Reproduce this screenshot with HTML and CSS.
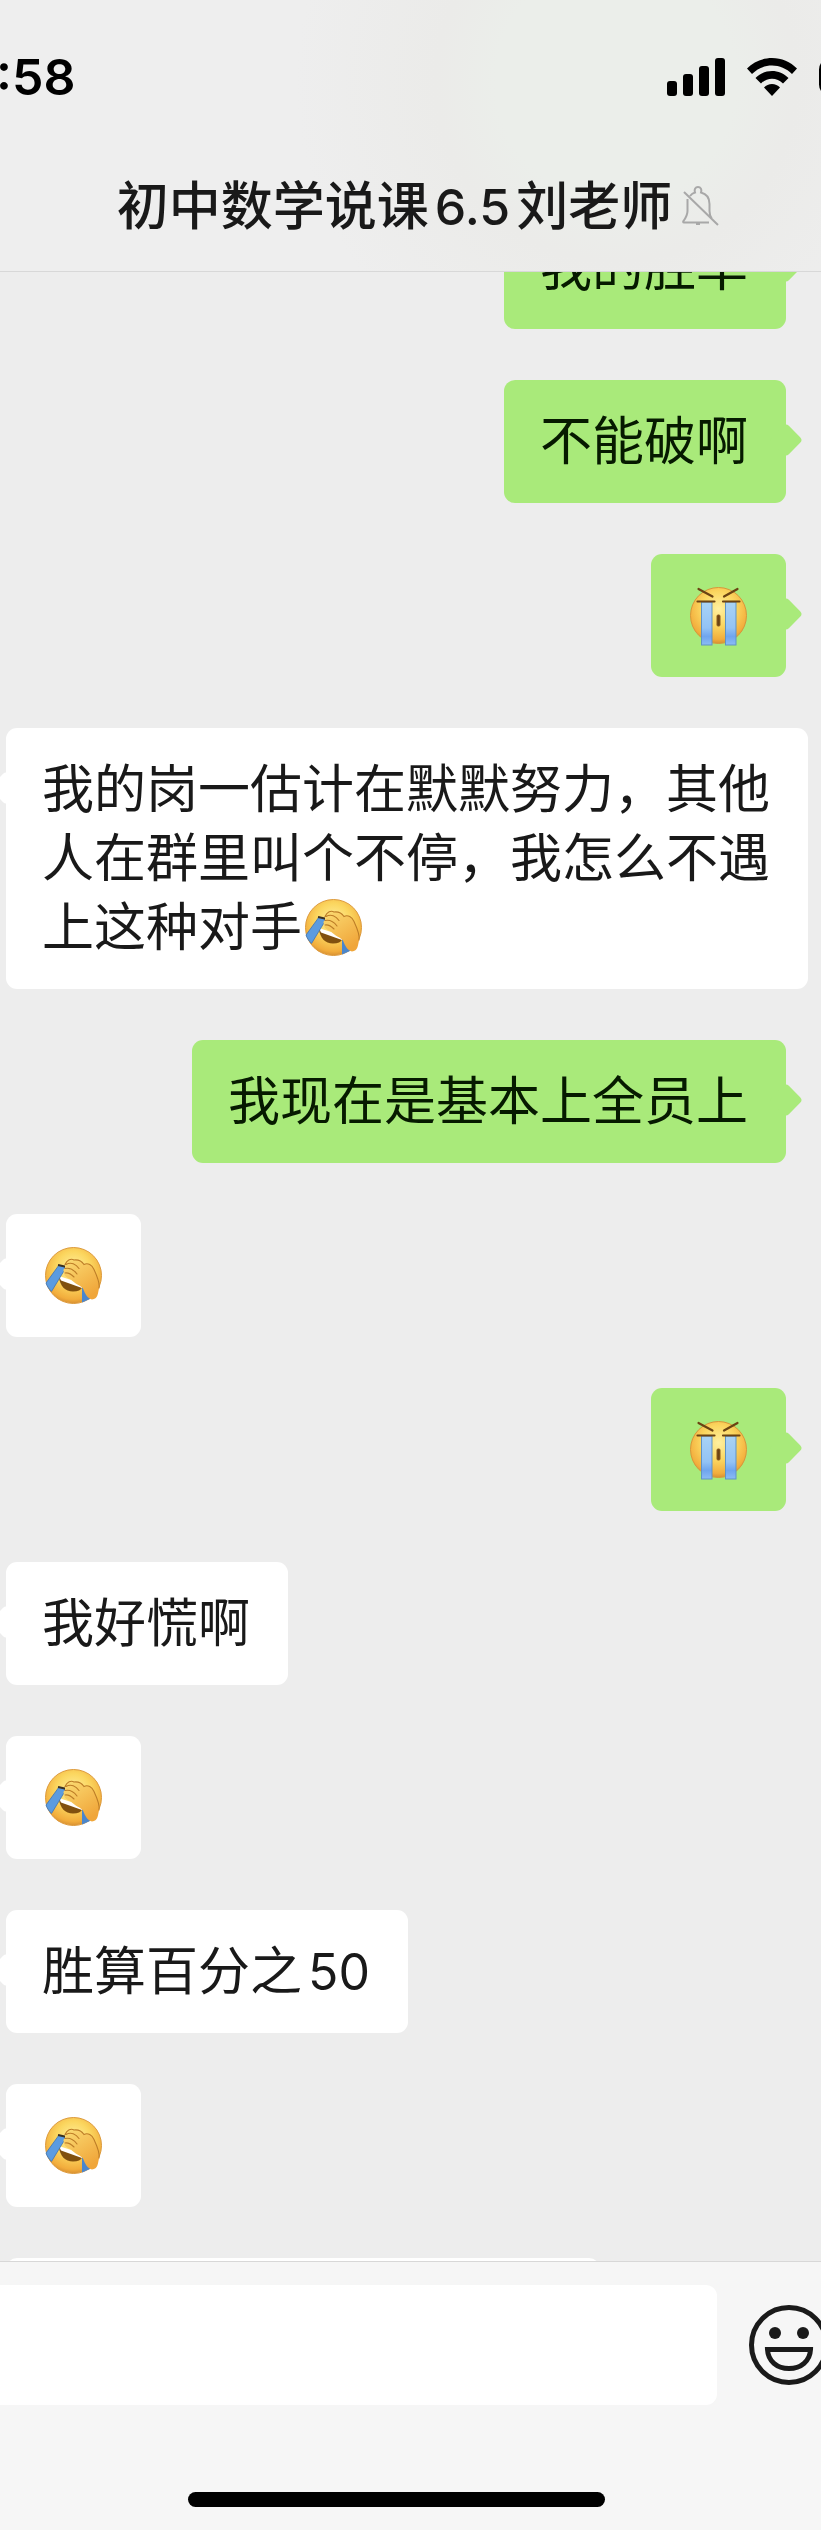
FILE: index.html
```html
<!DOCTYPE html>
<html lang="zh-CN">
<head>
  <meta charset="UTF-8">
  <meta name="viewport" content="width=device-width, initial-scale=1.0">
  <title>初中数学说课6.5刘老师</title>
  <link rel="stylesheet" href="styles.css">
</head>
<body>
  <!-- shared emoji shapes -->
  <svg class="defs" width="0" height="0" aria-hidden="true">
    <defs>
      <radialGradient id="face" cx="50%" cy="38%" r="62%">
        <stop offset="0" stop-color="#fff0a0"/>
        <stop offset="0.5" stop-color="#fbd65f"/>
        <stop offset="0.88" stop-color="#f2ad3c"/>
        <stop offset="1" stop-color="#d99132"/>
      </radialGradient>
      <linearGradient id="tear" x1="0" y1="0" x2="0" y2="1">
        <stop offset="0" stop-color="#a9d3f5"/>
        <stop offset="0.6" stop-color="#93c3f5"/>
        <stop offset="0.8" stop-color="#6fa5ee"/>
        <stop offset="1" stop-color="#8bbcf5"/>
      </linearGradient>
      <linearGradient id="hand" x1="0" y1="0" x2="0.6" y2="1">
        <stop offset="0" stop-color="#fbdc74"/>
        <stop offset="1" stop-color="#f0a63a"/>
      </linearGradient>
    </defs>
    <symbol id="cry" viewBox="0 0 61 61">
      <circle cx="30.5" cy="30.5" r="28" fill="url(#face)" stroke="#d8963a"/>
      <rect x="13.5" y="17" width="10.5" height="43" fill="url(#tear)" stroke="#5f93c4"/>
      <rect x="37.5" y="17" width="10.5" height="43" fill="url(#tear)" stroke="#5f93c4"/>
      <path d="M10.5 4 24.500 11.500M36 11.500 49.500 4M9.500 16.500H26.500M35 16.500H51.500" fill="none" stroke="#6b4313" stroke-width="2.200" stroke-linecap="round"/>
      <rect x="29" y="30" width="3" height="11" rx="1" fill="#6b4313" stroke="#8a5a1c"/>
    </symbol>
    <symbol id="facepalm" viewBox="0 0 61 61">
      <circle cx="30.5" cy="30.5" r="28" fill="url(#face)" stroke="#dd9a3c"/>
      <path d="M16 32C17 41 22 46.500 30 46.500 35 46.500 38 45 39.500 42Z" fill="#80500f"/>
      <path d="M16 31 40 39 39 43 18 35.500Z" fill="#fff"/>
      <path d="M16 20 23 22.500 8.500 46.500C5.500 43.500 4 41 3 38Z" fill="#5b9be0" stroke="#3c74b4" stroke-width="0.800"/>
      <path d="M39 42 46 46 47 54 39 57.500Z" fill="#4b86cc"/>
      <path d="M15 20 24 22" stroke="#3e3220" stroke-width="1.800"/>
      <path d="M22 19.500C24 15 28 13 31 15 35 14.500 39 16.500 41 19.500 45 17.500 49 20 51 24.500 54 31 57 39 56 43 55 48 55 54 49 54.500 45 54 42 49 40 43.500 37 40 32 39 28 34.500 24 33 20 30 21.500 28 20 26 20 24 22 23.500Z" fill="url(#hand)"/>
      <path d="M22 19.500C24 15 28 13 31 15 35 14.500 39 16.500 41 19.500 45 17.500 49 20 51 24.500 54 31 57 39 56 43M23 19.500C28 16.500 33 19 36 23.500M22 23.500C27 22.500 31 25 34 29M22 28C25 27.500 28 29 31 32" fill="none" stroke="#bd7d27" stroke-width="1.100" stroke-linecap="round"/>
    </symbol>
  </svg>

  <div class="app">
    <header class="header">
      <div class="status-bar">
        <span class="time">:58</span>
        <div class="status-icons">
          <svg width="58" height="38" viewBox="0 0 58 38" aria-hidden="true">
            <rect x="0" y="23" width="10" height="15" rx="3"/>
            <rect x="16" y="16" width="10" height="22" rx="3"/>
            <rect x="32" y="8" width="10" height="30" rx="3"/>
            <rect x="48" y="0" width="10" height="38" rx="3"/>
          </svg>
          <svg width="50" height="38" viewBox="0 0 50 38" aria-hidden="true">
            <path d="M25 0C34.500 0 43.500 4 50 10.500L45 16C39.500 10.500 32.500 7.500 25 7.500S10.500 10.500 5 16L0 10.500C6.500 4 15.500 0 25 0Z"/>
            <path d="M25 13C31 13 37 15.500 41.500 20L36 25.500C33 22.500 29 20.700 25 20.700S17 22.500 14 25.500L8.500 20C13 15.500 19 13 25 13Z"/>
            <path d="M25 26C28 26 31 27.200 33 29.500L25 38 17 29.500C19 27.200 22 26 25 26Z"/>
          </svg>
          <svg class="battery" width="76" height="38" viewBox="0 0 76 38" aria-hidden="true">
            <rect x="1.5" y="1.5" width="68" height="35" rx="10" fill="none" stroke="#000" stroke-width="3"/>
          </svg>
        </div>
      </div>
      <div class="title-bar">
        <h1>初中数学说课<span class="latin">6.5</span>刘老师</h1>
        <svg class="bell" width="38" height="40" viewBox="0 0 38 40" role="img" aria-label="消息免打扰">
          <path d="M8 10C9.500 8 11 7 13 6.500 12 3 13.500 1 16 1S20 3 19 6.500C25 8 27.500 12 27.500 18V25C27.500 29 28.500 31 30 33M27 36.500H2C1 36.500 1 35.500 1.500 35 4 31.500 5.500 29 5.500 25V13M2 6 36 39"/>
          <path d="M14 38H18"/>
        </svg>
      </div>
    </header>

    <main class="chat">
      <ul class="messages">
        <li class="bubble me">我的胜率</li>
        <li class="bubble me">不能破啊</li>
        <li class="bubble me"><svg class="emoji" role="img" aria-label="大哭"><use href="#cry"/></svg></li>
        <li class="bubble">我的岗一估计在默默努力，其他人在群里叫个不停，我怎么不遇上这种对手<svg class="emoji" role="img" aria-label="捂脸"><use href="#facepalm"/></svg></li>
        <li class="bubble me">我现在是基本上全员上</li>
        <li class="bubble"><svg class="emoji" role="img" aria-label="捂脸"><use href="#facepalm"/></svg></li>
        <li class="bubble me"><svg class="emoji" role="img" aria-label="大哭"><use href="#cry"/></svg></li>
        <li class="bubble">我好慌啊</li>
        <li class="bubble"><svg class="emoji" role="img" aria-label="捂脸"><use href="#facepalm"/></svg></li>
        <li class="bubble">胜算百分之<span class="latin">50</span></li>
        <li class="bubble"><svg class="emoji" role="img" aria-label="捂脸"><use href="#facepalm"/></svg></li>
        <li class="bubble next"></li>
      </ul>
    </main>

    <footer class="footer">
      <form class="composer">
        <input type="text" class="message-input" aria-label="输入消息">
        <button type="button" class="emoji-button" aria-label="表情">
          <svg width="80" height="80" viewBox="0 0 80 80" aria-hidden="true">
            <circle cx="40" cy="40" r="37.5" fill="none" stroke="#1a1a1a" stroke-width="5"/>
            <circle cx="26" cy="28" r="6" fill="#1a1a1a"/>
            <circle cx="54" cy="28" r="6" fill="#1a1a1a"/>
            <path d="M18.500 44.500H61.500C61 56 52 63.500 40 63.500S19 56 18.500 44.500Z" fill="none" stroke="#1a1a1a" stroke-width="5"/>
          </svg>
        </button>
      </form>
      <div class="home"><div class="home-indicator"></div></div>
    </footer>
  </div>
</body>
</html>
```
FILE: styles.css
```css
:root {
  --bg: #ededed;
  --bar: #f6f6f6;
  --line: #d8d8d8;
  --green: #a9ea7a;
  --text: #191919;
}

* {
  box-sizing: border-box;
}

body {
  margin: 0;
  font-family: Inter, "Noto Sans CJK SC", sans-serif;
  background: var(--bg);
  color: var(--text);
}

.defs {
  position: absolute;
}

.app {
  display: flex;
  flex-direction: column;
  height: 100vh;
  overflow: hidden;
}

/* header */
.header {
  flex: none;
  padding-bottom: 13px;
  border-bottom: 1px solid var(--line);
  background: radial-gradient(circle at 75% 30%, #ebeeea 0, #ebeeea 120px, #ebebe9 180px, #eee 320px);
  overflow: hidden;
}

.status-bar {
  display: flex;
  align-items: center;
  justify-content: space-between;
  height: 154px;
}

.time {
  margin-left: -4px;
  font-size: 50px;
  font-weight: 600;
  color: #000;
}

.status-icons {
  display: flex;
  gap: 22px;
}

.battery {
  margin-right: -74px;
}

.title-bar {
  display: flex;
  align-items: center;
  justify-content: center;
  gap: 10px;
  height: 104px;
  padding-left: 16px;
}

.title-bar h1 {
  margin: 0;
  font-size: 52px;
  font-weight: 500;
  line-height: 69px;
}

.latin {
  margin: 0 6px;
  font-size: 50px;
  line-height: 1;
}

.bell {
  fill: none;
  stroke: #a8a8a8;
  stroke-width: 2;
}

/* messages */
.chat {
  flex: 1;
  min-height: 0;
  overflow: hidden;
}

.messages {
  display: flex;
  flex-direction: column;
  align-items: flex-start;
  gap: 51px;
  margin: -66px 0 0;
  padding: 0 13px 0 6px;
  list-style: none;
}

.bubble {
  position: relative;
  max-width: 802px;
  min-height: 123px;
  padding: 27px 38px 27px 36px;
  border-radius: 11px;
  background: #fff;
  font-size: 52px;
  line-height: 69px;
}

.bubble::after {
  content: "";
  position: absolute;
  top: 48px;
  left: -12px;
  width: 24px;
  height: 24px;
  border-radius: 4px;
  background: inherit;
  transform: rotate(45deg);
}

.bubble.me {
  align-self: flex-end;
  margin-right: 22px;
  background: var(--green);
  color: #061a00;
}

.bubble.me::after {
  left: auto;
  right: -12px;
}

.bubble.next {
  width: 594px;
}

.bubble .latin {
  margin-right: 0;
}

.emoji {
  display: inline-block;
  width: 61px;
  height: 61px;
  margin: 0 -1px 0 1px;
  vertical-align: -12px;
}

/* bottom bar */
.footer {
  flex: none;
  border-top: 1px solid var(--line);
  background: var(--bar);
}

.composer {
  display: flex;
  align-items: center;
  gap: 32px;
  padding-top: 23px;
}

.message-input {
  flex: 1;
  min-width: 0;
  height: 120px;
  padding: 0 24px;
  border: 0;
  border-radius: 0 11px 11px 0;
  background: #fff;
  font: inherit;
  font-size: 52px;
}

.emoji-button {
  flex: none;
  margin-right: -8px;
  padding: 0;
  border: 0;
  background: none;
}

.emoji-button svg {
  display: block;
}

.home {
  display: flex;
  justify-content: center;
  padding: 87px 28px 23px 0;
}

.home-indicator {
  width: 417px;
  height: 15px;
  border-radius: 8px;
  background: #000;
}
```
